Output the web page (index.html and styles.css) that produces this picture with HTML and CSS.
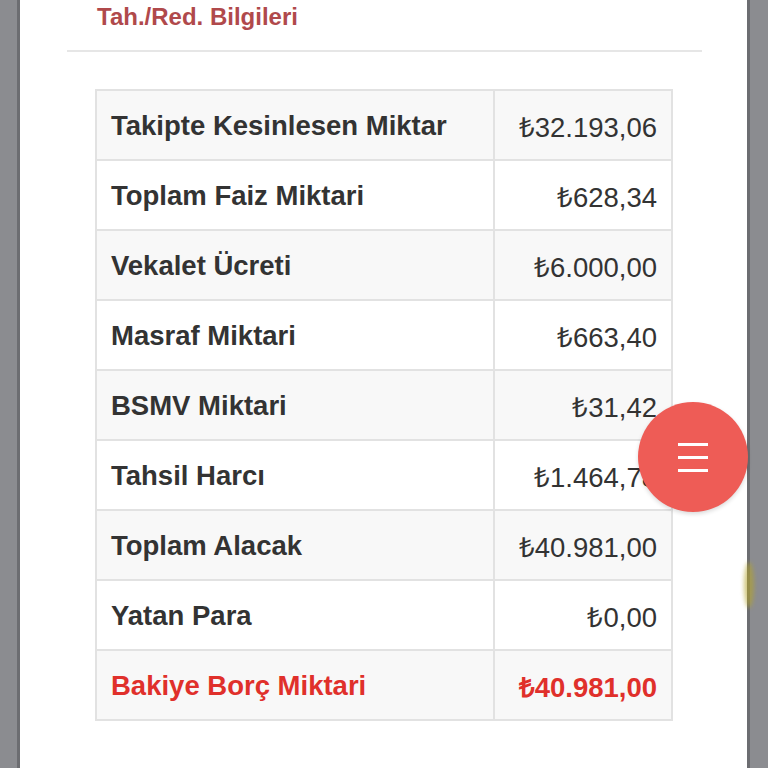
FILE: index.html
```html
<!DOCTYPE html>
<html lang="tr">
<head>
<meta charset="utf-8">
<link rel="stylesheet" href="styles.css">
</head>
<body>
<div class="screen">
  <div class="panel">
    <div class="header">
      <h2 class="title">Tah./Red. Bilgileri</h2>
    </div>
    <div class="content">
      <table class="summary">
        <tbody>
          <tr><th>Takipte Kesinlesen Miktar</th><td>₺32.193,06</td></tr>
          <tr><th>Toplam Faiz Miktari</th><td>₺628,34</td></tr>
          <tr><th>Vekalet Ücreti</th><td>₺6.000,00</td></tr>
          <tr><th>Masraf Miktari</th><td>₺663,40</td></tr>
          <tr><th>BSMV Miktari</th><td>₺31,42</td></tr>
          <tr><th>Tahsil Harcı</th><td>₺1.464,78</td></tr>
          <tr><th>Toplam Alacak</th><td>₺40.981,00</td></tr>
          <tr><th>Yatan Para</th><td>₺0,00</td></tr>
          <tr class="total"><th>Bakiye Borç Miktari</th><td>₺40.981,00</td></tr>
        </tbody>
      </table>
    </div>
  </div>
  <span class="peek"></span>
  <button class="fab" aria-label="Menü">
    <span class="bar"></span><span class="bar"></span><span class="bar"></span>
  </button>
</div>
</body>
</html>
```
FILE: styles.css
```css
html, body {
  margin: 0;
  padding: 0;
}
body {
  background: #8b8c90;
  font-family: "Liberation Sans", Arial, sans-serif;
  width: 768px;
  height: 768px;
  overflow: hidden;
}
.screen {
  position: relative;
  height: 768px;
  padding: 0 21px 0 20px;
}
.panel {
  background: #ffffff;
  height: 768px;
  box-shadow: 0 0 0 3px #6c6d71;
  display: flex;
  flex-direction: column;
}
.header {
  margin: 0 45px 0 47px;
  border-bottom: 2px solid #e6e6e6;
  height: 52px;
  box-sizing: border-box;
  padding-left: 30px;
}
.title {
  margin: 0;
  font-size: 24px;
  line-height: 30px;
  margin-top: 2px;
  font-weight: bold;
  color: #b0494b;
}
.content {
  padding: 37px 74px 0 75px;
}
.summary {
  width: 578px;
  border-collapse: collapse;
  border: 2px solid #e2e2e2;
}
.summary th,
.summary td {
  border: 2px solid #e2e2e2;
  height: 70px;
  box-sizing: border-box;
  padding: 2px 14px 0 14px;
  font-size: 27.5px;
  color: #333333;
}
.summary th {
  text-align: left;
  font-weight: bold;
  width: 398px;
}
.summary td {
  text-align: right;
  font-weight: normal;
}
.summary tr:nth-child(odd) {
  background: #f8f8f8;
}
.summary tr.total th,
.summary tr.total td {
  color: #e0302b;
  font-weight: bold;
}
.fab {
  position: absolute;
  left: 638px;
  top: 402px;
  width: 110px;
  height: 110px;
  border-radius: 50%;
  border: none;
  background: #ee5c56;
  box-shadow: 0 2px 4px rgba(0,0,0,0.15);
  display: flex;
  flex-direction: column;
  align-items: center;
  justify-content: center;
  gap: 10px;
  padding: 0;
}
.fab .bar {
  display: block;
  width: 30px;
  height: 3px;
  background: #ffffff;
}
.peek {
  position: absolute;
  left: 744px;
  top: 562px;
  width: 10px;
  height: 46px;
  border-radius: 50%;
  background: #b4a42a;
  filter: blur(2px);
  opacity: 0.6;
}
```
